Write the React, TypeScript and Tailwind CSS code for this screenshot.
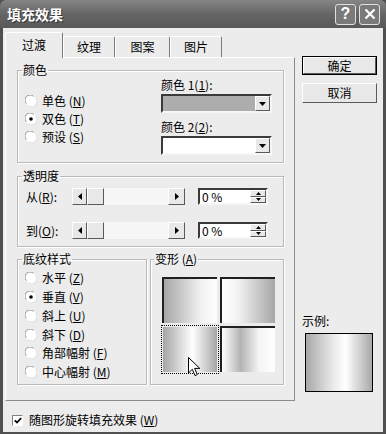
import React from 'react'

// 经典 Windows 对话框：填充效果
const RAISED = 'bg-[#e8e8e8] border border-t-white border-l-white border-r-[#5a5a5a] border-b-[#5a5a5a]'
const SUNKEN = 'border-2 border-t-[#3a3a3a] border-l-[#3a3a3a] border-r-[#f6f6f6] border-b-[#f6f6f6]'
const GROUP = 'border border-[#b9b9b9] shadow-[inset_1px_1px_0_#fff,1px_1px_0_#fff] min-w-0'

function Mn({ k }: { k: string }) {
  return (
    <span>
      (<span className="underline underline-offset-1">{k}</span>)
    </span>
  )
}

function Radio({ on }: { on?: boolean }) {
  return (
    <svg width="12" height="12" viewBox="0 0 12 12" className="shrink-0">
      <circle cx="6" cy="6" r="5.5" fill="#fff" />
      <path d="M1.4 8.6A5 5 0 0 1 8.6 1.4" stroke="#9a9a9a" fill="none" />
      <path d="M10.6 3.4A5 5 0 0 1 3.4 10.6" stroke="#dedede" fill="none" />
      {on && <circle cx="6" cy="6" r="1.8" fill="#000" />}
    </svg>
  )
}

function Tri({ dir }: { dir: 'down' | 'left' | 'right' | 'up' }) {
  const d = {
    down: 'M0 0h7L3.5 4z',
    up: 'M0 4h7L3.5 0z',
    left: 'M4 0v7L0 3.5z',
    right: 'M0 0v7L4 3.5z',
  }[dir]
  const w = dir === 'down' || dir === 'up' ? 7 : 4
  const h = dir === 'down' || dir === 'up' ? 4 : 7
  return (
    <svg width={w} height={h} viewBox={`0 0 ${w} ${h}`}>
      <path d={d} fill="#000" />
    </svg>
  )
}

function Combo({ fill }: { fill: string }) {
  return (
    <div className={`h-[19px] w-[111px] flex bg-white ${SUNKEN}`}>
      <div className={`flex-1 ${fill}`} />
      <div className={`w-[15px] flex items-center justify-center ${RAISED}`}>
        <Tri dir="down" />
      </div>
    </div>
  )
}

function Slider() {
  return (
    <div className="flex h-[17px] w-[113px]">
      <div className={`w-[15px] flex items-center justify-center ${RAISED}`}>
        <Tri dir="left" />
      </div>
      <div className={`w-[17px] ${RAISED}`} />
      <div className="flex-1 bg-[#f7f7f7]" />
      <div className={`w-[17px] flex items-center justify-center ${RAISED}`}>
        <Tri dir="right" />
      </div>
    </div>
  )
}

function Spin() {
  return (
    <div className={`h-[17px] w-[70px] flex bg-white ${SUNKEN}`}>
      <span className="flex-1 pl-[2px] text-[12px] leading-[13px]">0 %</span>
      <div className="w-[16px] flex flex-col">
        <div className={`flex-1 flex items-center justify-center ${RAISED}`}>
          <svg width="5" height="3" viewBox="0 0 5 3"><path d="M0 3h5L2.5 0z" fill="#000" /></svg>
        </div>
        <div className={`flex-1 flex items-center justify-center ${RAISED}`}>
          <svg width="5" height="3" viewBox="0 0 5 3"><path d="M0 0h5L2.5 3z" fill="#000" /></svg>
        </div>
      </div>
    </div>
  )
}

const TABS = [
  { label: '纹理', w: 'w-[52px]' },
  { label: '图案', w: 'w-[55px]' },
  { label: '图片', w: 'w-[52px]' },
]

const STYLES = [
  { label: '水平', k: 'Z' },
  { label: '垂直', k: 'V', on: true },
  { label: '斜上', k: 'U' },
  { label: '斜下', k: 'D' },
  { label: '角部幅射', k: 'F' },
  { label: '中心幅射', k: 'M' },
]

const TILES = [
  { bg: 'bg-[linear-gradient(90deg,#a6a6a6,#f2f2f2_70%,#ffffff)]', focus: false },
  { bg: 'bg-[linear-gradient(90deg,#ffffff,#f2f2f2_30%,#a6a6a6)]', focus: false },
  { bg: 'bg-[linear-gradient(90deg,#a6a6a6,#ffffff_55%,#a6a6a6)]', focus: true },
  { bg: 'bg-[linear-gradient(90deg,#ffffff,#b4b4b4_35%,#f4f4f4_70%,#ffffff)]', focus: false },
]

export default function App() {
  return (
    <div className="w-[386px] h-[434px] flex flex-col bg-[#505050] text-black text-[12px] leading-[12px] font-['Noto_Sans_CJK_SC','Noto_Sans',sans-serif] overflow-hidden">
      {/* 标题栏 */}
      <div className="h-[28px] shrink-0 flex items-center pl-[7px] pr-[6px] rounded-t-[6px] bg-linear-to-b from-[#858585] via-[#656565] to-[#595959]">
        <span className="text-white font-bold text-[14px] leading-[14px] [text-shadow:1px_1px_0_#333]">填充效果</span>
        <div className="ml-auto flex gap-[3px]">
          <div className="w-[21px] h-[21px] rounded-[3px] border border-[#e0e0e0] bg-[#7a7a7a] flex items-center justify-center text-white font-bold text-[16px] leading-[16px] font-['Liberation_Sans',sans-serif]">?</div>
          <div className="w-[21px] h-[21px] rounded-[3px] border border-[#e0e0e0] bg-[#7a7a7a] flex items-center justify-center">
            <svg width="12" height="12" viewBox="0 0 12 12">
              <path d="M1.5 1.5l9 9M10.5 1.5l-9 9" stroke="#fff" strokeWidth="2.2" />
            </svg>
          </div>
        </div>
      </div>

      {/* 主体 */}
      <div className="flex-1 mx-[3px] mb-[2px] bg-[#ececec] flex pt-[4px]">
        {/* 左侧 */}
        <div className="ml-[2px] w-[290px] flex flex-col">
          {/* 标签页 */}
          <div className="h-[25px] flex items-end">
            <div className="relative z-10 -mb-px w-[58px] h-[26px] bg-[#ececec] border-t border-l border-white border-r border-r-[#7a7a7a] rounded-t-[2px] flex items-center justify-center pb-[2px]">
              过渡
            </div>
            {TABS.map(t => (
              <div
                key={t.label}
                className={`${t.w} h-[21px] border-t border-l border-white border-r border-r-[#7a7a7a] rounded-t-[2px] flex items-center justify-center`}
              >
                {t.label}
              </div>
            ))}
          </div>

          {/* 面板 */}
          <div className="h-[344px] border border-t-white border-l-white border-r-[#8a8a8a] border-b-[#8a8a8a] pt-[6px] pl-[11px] pr-[10px] flex flex-col">
            {/* 颜色 */}
            <fieldset className={`h-[99px] ${GROUP}`}>
              <legend className="ml-[4px] px-[1px]">颜色</legend>
              <div className="flex pl-[7px] pr-[11px]">
                <div className="pt-[16px] flex flex-col">
                  <div className="h-[18px] flex items-center gap-[5px]"><Radio /><span>单色 <Mn k="N" /></span></div>
                  <div className="h-[18px] flex items-center gap-[5px]"><Radio on /><span>双色 <Mn k="T" /></span></div>
                  <div className="h-[18px] flex items-center gap-[5px]"><Radio /><span>预设 <Mn k="S" /></span></div>
                </div>
                <div className="ml-auto w-[111px] flex flex-col pt-[3px]">
                  <span>颜色 1<Mn k="1" />:</span>
                  <div className="mt-[3px]"><Combo fill="bg-[#adadad]" /></div>
                  <span className="mt-[8px]">颜色 2<Mn k="2" />:</span>
                  <div className="mt-[3px]"><Combo fill="bg-white" /></div>
                </div>
              </div>
            </fieldset>

            {/* 透明度 */}
            <fieldset className={`mt-[7px] h-[77px] ${GROUP}`}>
              <legend className="ml-[4px] px-[1px]">透明度</legend>
              <div className="pt-[6px] pl-[8px] flex flex-col gap-[17px]">
                <div className="h-[17px] flex items-center">
                  <span className="w-[46px]">从<Mn k="R" />:</span>
                  <Slider />
                  <div className="ml-[13px]"><Spin /></div>
                </div>
                <div className="h-[17px] flex items-center">
                  <span className="w-[46px]">到<Mn k="O" />:</span>
                  <Slider />
                  <div className="ml-[13px]"><Spin /></div>
                </div>
              </div>
            </fieldset>

            {/* 底纹样式 / 变形 */}
            <div className="mt-[6px] h-[132px] flex gap-[3px]">
              <fieldset className={`w-[130px] h-full ${GROUP}`}>
                <legend className="ml-[4px] px-[1px]">底纹样式</legend>
                <div className="pt-[4px] pl-[7px] flex flex-col">
                  {STYLES.map(s => (
                    <div key={s.label} className="h-[18.75px] flex items-center gap-[5px]">
                      <Radio on={s.on} />
                      <span>{s.label} <Mn k={s.k} /></span>
                    </div>
                  ))}
                </div>
              </fieldset>
              <fieldset className={`flex-1 h-full ${GROUP}`}>
                <legend className="ml-[3px] px-[1px]">变形 <Mn k="A" /></legend>
                <div className="pt-[11px] pl-[10px]">
                  <div className="relative grid grid-cols-[58px_58px] grid-rows-[49px_49px] w-[116px]">
                    {TILES.map((t, i) => (
                      <div
                        key={i}
                        className={`p-[1px] ${t.focus ? 'border border-dotted border-black' : 'pr-[2px] pb-[2px]'}`}
                      >
                        <div className={`w-full h-full ${t.focus ? '' : 'border-t-2 border-l-2 border-[#202020]'} ${t.bg}`} />
                      </div>
                    ))}
                    {/* 鼠标指针 */}
                    <svg width="13" height="20" viewBox="0 0 13 20" className="absolute left-[27px] top-[81px]">
                      <path d="M0.5 0.5V16L4.3 12.3L7 18.6L9.3 17.6L6.7 11.4H11.8Z" fill="#fff" stroke="#000" strokeLinejoin="round" />
                    </svg>
                  </div>
                </div>
              </fieldset>
            </div>
          </div>

          {/* 复选框 */}
          <div className="mt-[13px] h-[12px] flex items-center ml-[7px] gap-[6px]">
            <div className="w-[11px] h-[11px] bg-white flex items-center justify-center border border-t-[#808080] border-l-[#808080] border-r-white border-b-white">
              <svg width="8" height="7" viewBox="0 0 8 7">
                <path d="M0.8 3.3L3 5.5L7.2 1" stroke="#000" strokeWidth="1.8" fill="none" />
              </svg>
            </div>
            <span>随图形旋转填充效果 <Mn k="W" /></span>
          </div>
        </div>

        {/* 右侧 */}
        <div className="ml-[7px] w-[75px] flex flex-col">
          <div className="mt-[24px] h-[19px] border border-black flex">
            <div className={`flex-1 flex items-center justify-center ${RAISED}`}>确定</div>
          </div>
          <div className={`mt-[8px] h-[20px] flex items-center justify-center ${RAISED}`}>取消</div>
          <span className="mt-[212px] h-[12px]">示例:</span>
          <div className="mt-[6px] ml-[3px] w-[68px] h-[59px] border border-black bg-[linear-gradient(90deg,#a8a8a8,#e8e8e8_40%,#ffffff_60%,#a8a8a8)]" />
        </div>
      </div>
    </div>
  )
}
